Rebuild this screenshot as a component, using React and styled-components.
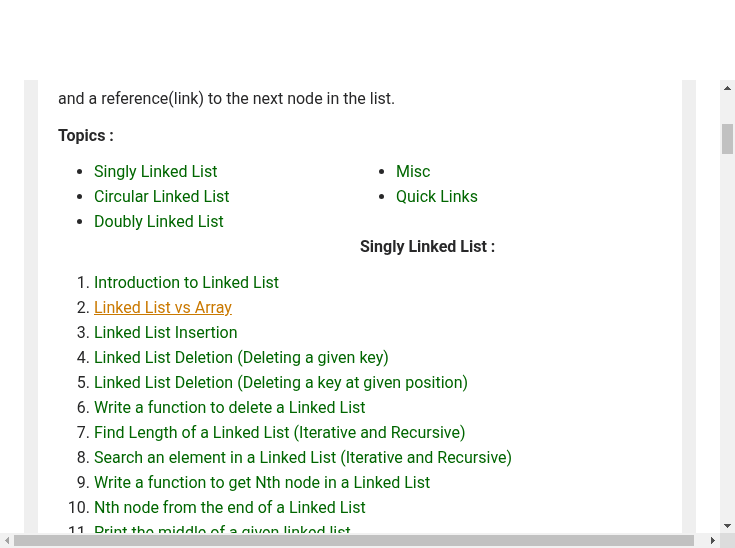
import React from "react";
import styled, { createGlobalStyle } from "styled-components";

const GlobalStyle = createGlobalStyle`
  * { box-sizing: border-box; }
  body {
    margin: 0;
    background: #fff;
    color: #282829;
    font: 16px/25px Roboto, sans-serif;
    overflow: hidden;
  }
`;

const Page = styled.div`
  height: 100vh;
  display: grid;
  grid-template-columns: minmax(0, 1fr) 15px;
  grid-template-rows: 80px minmax(0, 1fr) 15px;
`;

const Header = styled.header`
  grid-column: 1 / -1;
  background: #fff;
`;

const Viewport = styled.main`
  overflow: hidden;
  padding: 0 24px;
  will-change: transform;
`;

const Article = styled.article`
  min-height: 100%;
  padding: 6px 20px 0;
  border: solid #efefef;
  border-width: 0 14px;
`;

const Paragraph = styled.p`
  margin: 0 0 12px;
`;

const TopicsTitle = styled.h2`
  margin: 0 0 11px;
  font-size: 16px;
  font-weight: 700;
`;

const Topics = styled.section`
  display: grid;
  grid-template-columns: 1fr 1fr;
  margin-bottom: 11px;
`;

const SectionTitle = styled.h3`
  grid-column: 2;
  margin: 0;
  font-size: 16px;
  font-weight: 700;
`;

const BulletList = styled.ul`
  margin: 0;
  padding-left: 36px;
`;

const NumberedList = styled.ol`
  margin: 0;
  padding-left: 36px;
`;

const Link = styled.a`
  color: ${({ $active }) => ($active ? "#ca7900" : "#006600")};
  text-decoration: ${({ $active }) => ($active ? "underline" : "none")};
`;

const Track = styled.div`
  display: flex;
  flex-direction: ${({ $vertical }) => ($vertical ? "column" : "row")};
  align-items: center;
  background: #f1f1f1;
`;

const ArrowButton = styled.button`
  flex: none;
  display: flex;
  width: ${({ $short }) => ($short ? "14px" : "15px")};
  height: 15px;
  padding: 0;
  border: 0;
  background: transparent;
  color: ${({ $dim }) => ($dim ? "#a3a3a3" : "#505050")};
`;

const ArrowIcon = styled.svg`
  flex: none;
  width: 15px;
  height: 15px;
`;

const Rail = styled.div`
  flex: 1;
  display: flex;
  align-items: flex-start;
  padding: ${({ $vertical }) => ($vertical ? "29px 0 0" : "0 11px 0 0")};
`;

const Thumb = styled.div`
  width: ${({ $vertical }) => ($vertical ? "11px" : "100%")};
  height: ${({ $vertical }) => ($vertical ? "30px" : "11px")};
  background: #c1c1c1;
`;

const Corner = styled.div`
  background: #dcdcdc;
`;

const arrows = {
  up: "M7 6h1v1h1v1h1v1h1v1H4V9h1V8h1V7h1z",
  down: "M4 6h7v1h-1v1H9v1H8v1H7V9H6V8H5V7H4z",
  left: "M9 4v7H8v-1H7V9H6V8H5V7h1V6h1V5h1V4z",
  right: "M6 4h1v1h1v1h1v1h1v1H9v1H8v1H7v1H6z",
};

function Arrow({ direction, ...rest }) {
  return (
    <ArrowButton type="button" aria-label={`Scroll ${direction}`} {...rest}>
      <ArrowIcon viewBox="0 0 15 15" shapeRendering="crispEdges" aria-hidden="true">
        <path d={arrows[direction]} fill="currentColor" />
      </ArrowIcon>
    </ArrowButton>
  );
}

const topicColumns = [
  ["Singly Linked List", "Circular Linked List", "Doubly Linked List"],
  ["Misc", "Quick Links"],
];

const lessons = [
  "Introduction to Linked List",
  "Linked List vs Array",
  "Linked List Insertion",
  "Linked List Deletion (Deleting a given key)",
  "Linked List Deletion (Deleting a key at given position)",
  "Write a function to delete a Linked List",
  "Find Length of a Linked List (Iterative and Recursive)",
  "Search an element in a Linked List (Iterative and Recursive)",
  "Write a function to get Nth node in a Linked List",
  "Nth node from the end of a Linked List",
  "Print the middle of a given linked list",
];

export default function App() {
  return (
    <>
      <GlobalStyle />
      <Page>
        <Header />
        <Viewport>
          <Article>
            <Paragraph>and a reference(link) to the next node in the list.</Paragraph>
            <TopicsTitle>Topics :</TopicsTitle>
            <Topics>
              {topicColumns.map((column) => (
                <BulletList key={column[0]}>
                  {column.map((topic) => (
                    <li key={topic}><Link href="#">{topic}</Link></li>
                  ))}
                </BulletList>
              ))}
              <SectionTitle>Singly Linked List :</SectionTitle>
            </Topics>
            <NumberedList>
              {lessons.map((lesson, index) => (
                <li key={lesson}><Link href="#" $active={index === 1}>{lesson}</Link></li>
              ))}
            </NumberedList>
          </Article>
        </Viewport>
        <Track $vertical>
          <Arrow direction="up" />
          <Rail $vertical><Thumb $vertical /></Rail>
          <Arrow direction="down" />
        </Track>
        <Track>
          <Arrow direction="left" $dim $short />
          <Rail><Thumb /></Rail>
          <Arrow direction="right" />
        </Track>
        <Corner />
      </Page>
    </>
  );
}
